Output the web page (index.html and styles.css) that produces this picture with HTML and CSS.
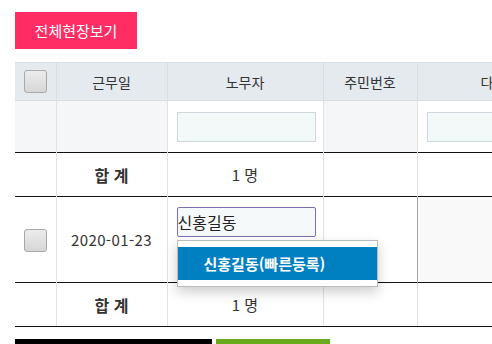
FILE: index.html
```html
<!DOCTYPE html>
<html lang="ko">
<head>
    <meta charset="UTF-8">
    <meta name="viewport" content="width=device-width, initial-scale=1.0">
    <title>근무 현황</title>
    <link rel="stylesheet" href="styles.css">
</head>
<body>
    <div class="top_bar">
        <button class="btn_all">전체현장보기</button>
    </div>
    <table class="work_table">
        <colgroup>
            <col class="c_chk">
            <col class="c_date">
            <col class="c_worker">
            <col class="c_idnum">
            <col class="c_more">
        </colgroup>
        <thead>
            <tr class="head_row">
                <th><span class="chk"></span></th>
                <th>근무일</th>
                <th>노무자</th>
                <th>주민번호</th>
                <th class="th_more">다</th>
            </tr>
            <tr class="filter_row">
                <td class="gray"></td>
                <td class="gray"></td>
                <td><input type="text" class="filter_input"></td>
                <td class="gray"></td>
                <td><input type="text" class="filter_input"></td>
            </tr>
        </thead>
        <tbody>
            <tr class="sum_row">
                <td></td>
                <td class="bold">합 계</td>
                <td>1 명</td>
                <td></td>
                <td></td>
            </tr>
            <tr class="data_row">
                <td><span class="chk"></span></td>
                <td class="date">2020-01-23</td>
                <td class="worker_cell">
                    <input type="text" class="name_input" value="신홍길동">
                    <ul class="ac_menu">
                        <li class="ac_item">신홍길동(빠른등록)</li>
                    </ul>
                </td>
                <td></td>
                <td class="gray_cell"></td>
            </tr>
            <tr class="sum_row">
                <td></td>
                <td class="bold">합 계</td>
                <td>1 명</td>
                <td></td>
                <td></td>
            </tr>
        </tbody>
    </table>
    <div class="bottom_bars">
        <span class="bar_black"></span>
        <span class="bar_green"></span>
    </div>
</body>
</html>
```
FILE: styles.css
```css
body {
    margin: 0;
    padding: 12px 15px 0;
    font-family: "Noto Sans CJK KR", "Noto Sans", sans-serif;
    color: #333;
    background-color: #fff;
    overflow: hidden;
}
.top_bar {
    height: 37px;
    margin-bottom: 13px;
}
.btn_all {
    height: 37px;
    width: 122px;
    border: none;
    background-color: #ff2d64;
    color: #fff;
    font-family: inherit;
    font-size: 15px;
    padding: 0;
}
.work_table {
    border-collapse: collapse;
    table-layout: fixed;
    width: 542px;
    font-size: 15px;
}
.c_chk { width: 41px; }
.c_date { width: 111px; }
.c_worker { width: 156px; }
.c_idnum { width: 94px; }
.c_more { width: 140px; }
.work_table th,
.work_table td {
    border-left: 1px solid #e2e2e2;
    text-align: center;
    padding: 0;
}
.work_table tr > :first-child {
    border-left: none;
}
.head_row {
    height: 38px;
}
.head_row th {
    background-color: #e4eaee;
    border-top: 1px solid #d6dee3;
    border-bottom: 1px solid #d6dee3;
    border-left-color: #d6dee3;
    font-weight: normal;
    font-size: 14px;
}
.th_more {
    text-align: left !important;
    padding-left: 63px !important;
}
.filter_row {
    height: 52px;
}
.filter_row td {
    text-align: left;
    padding-left: 9px;
}
.filter_row td.gray {
    background-color: #f5f6f7;
}
.filter_input {
    box-sizing: border-box;
    width: 139px;
    height: 30px;
    border: 1px solid #cdd6da;
    background-color: #f3f8f9;
    display: block;
}
.sum_row {
    height: 44px;
}
.sum_row td {
    border-top: 1px solid #111;
}
.work_table tbody tr:last-child td {
    border-bottom: 1px solid #111;
}
.bold {
    font-weight: bold;
    font-size: 16px;
}
.date {
    letter-spacing: 0.4px;
}
.data_row {
    height: 86px;
}
.data_row td {
    border-top: 1px solid #111;
}
.data_row td.gray_cell {
    background-color: #f9f9f9;
    border-left-color: #a8a8a8;
}
.worker_cell {
    position: relative;
    vertical-align: top;
    text-align: left !important;
    padding: 10px 0 0 9px !important;
}
.name_input {
    box-sizing: border-box;
    width: 139px;
    height: 30px;
    border: 1px solid #7f6fb0;
    border-radius: 2px;
    background-color: #f6f9fa;
    font-family: inherit;
    font-size: 16px;
    color: #222;
    padding: 0;
    display: block;
}
.ac_menu {
    position: absolute;
    left: 9px;
    top: 43px;
    width: 201px;
    margin: 0;
    padding: 6px 0;
    list-style: none;
    background-color: #fff;
    border: 1px solid #bbb;
    box-sizing: border-box;
    box-shadow: 0 5px 12px rgba(0, 0, 0, 0.2);
    z-index: 2;
}
.ac_item {
    height: 33px;
    line-height: 33px;
    padding-left: 26px;
    background-color: #0080c0;
    color: #fff;
    font-weight: bold;
    font-size: 15px;
}
.chk {
    display: inline-block;
    width: 21px;
    height: 21px;
    border: 1px solid #a9a9a9;
    border-radius: 3px;
    background: linear-gradient(#ececec, #d6d6d6);
    vertical-align: middle;
}
.bottom_bars {
    display: flex;
    gap: 4px;
    margin-top: 12px;
}
.bar_black {
    width: 197px;
    height: 6px;
    background-color: #000;
}
.bar_green {
    width: 114px;
    height: 6px;
    background-color: #6aaa1e;
}
```
